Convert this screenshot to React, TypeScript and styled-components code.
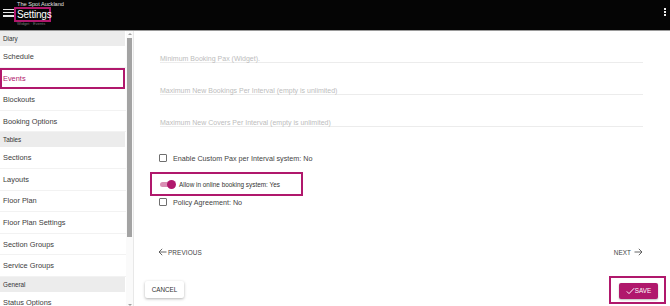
import React from "react";
import styled, { createGlobalStyle, css } from "styled-components";

const Global = createGlobalStyle`
  html, body { margin: 0; padding: 0; background: #fff; }
  body { font-family: "Liberation Sans", Arial, sans-serif; }
  * { box-sizing: border-box; }
`;

const ACCENT = "#b0186c";

const Page = styled.div`
  width: 670px;
  height: 306px;
  display: flex;
  flex-direction: column;
  overflow: hidden;
`;

const TopBar = styled.header`
  height: 31px;
  flex: none;
  background: #050505;
  border-bottom: 1px solid #9a9a9a;
  display: flex;
  align-items: flex-start;
  padding: 0 4px 0 3px;
`;

const MenuButton = styled.div`
  width: 11px;
  margin-top: 9px;
  display: flex;
  flex-direction: column;
  gap: 2px;
  span {
    display: block;
    height: 1.2px;
    background: #e8e8e8;
  }
`;

const TitleBlock = styled.div`
  margin-left: 0px;
  display: flex;
  flex-direction: column;
`;

const Venue = styled.div`
  font-size: 5.6px;
  line-height: 6px;
  color: #e0e0e0;
  margin-top: 1px;
  padding-left: 3px;
  white-space: nowrap;
`;

const TitleBox = styled.div`
  width: 37px;
  height: 15px;
  border: 2px solid ${ACCENT};
  padding-left: 1px;
  font-size: 10px;
  line-height: 11px;
  letter-spacing: -0.2px;
  color: #fff;
  white-space: nowrap;
`;

const SubTitle = styled.div`
  font-size: 4px;
  line-height: 4px;
  color: #777;
  padding-left: 3px;
  white-space: nowrap;
`;

const Spacer = styled.div`
  flex: 1;
`;

const Kebab = styled.div`
  margin-top: 8px;
  display: flex;
  flex-direction: column;
  gap: 1.6px;
  span {
    width: 1.6px;
    height: 1.6px;
    background: #eee;
  }
`;

const Body = styled.div`
  flex: 1;
  display: flex;
  min-height: 0;
`;

const Sidebar = styled.nav`
  width: 134px;
  flex: none;
  display: flex;
  border-right: 1px solid #e8e8e8;
`;

const NavList = styled.div`
  flex: 1;
  overflow: hidden;
  display: flex;
  flex-direction: column;
`;

const GroupHeader = styled.div`
  flex: none;
  height: 15px;
  background: #ececec;
  font-size: 6.3px;
  color: #333;
  display: flex;
  align-items: center;
  padding-left: 3px;
  margin-right: 1px;
`;

const NavItem = styled.div<{ $active?: boolean }>`
  flex: none;
  height: 21.6px;
  display: flex;
  align-items: center;
  padding-left: 3px;
  font-size: 7.4px;
  color: #3c3c3c;
  border-bottom: 1px solid #f2f2f2;
  ${(p) =>
    p.$active &&
    css`
      color: ${ACCENT};
      border: 2px solid ${ACCENT};
      padding-left: 1px;
      margin-right: 1px;
    `}
`;

const ScrollTrack = styled.div`
  width: 7px;
  flex: none;
  display: flex;
  flex-direction: column;
  align-items: center;
  padding-top: 2px;
  background: #fafafa;
`;

const ScrollArrow = styled.div<{ $down?: boolean }>`
  width: 0;
  height: 0;
  border-left: 2px solid transparent;
  border-right: 2px solid transparent;
  ${(p) =>
    p.$down
      ? css`border-top: 2px solid #a0a0a0;`
      : css`border-bottom: 2px solid #a0a0a0;`}
`;

const ScrollThumb = styled.div`
  width: 5px;
  height: 199px;
  margin-top: 3px;
  background: #a3a3a3;
`;

const Main = styled.main`
  flex: 1;
  display: flex;
  flex-direction: column;
`;

const Form = styled.div`
  padding: 0 27px 0 26px;
  display: flex;
  flex-direction: column;
`;

const Field = styled.div`
  height: 32px;
  display: flex;
  align-items: flex-end;
  padding-bottom: 0;
  border-bottom: 1px solid #ececec;
  font-size: 7px;
  line-height: 7px;
  color: #bdbdbd;
`;

const CheckRow = styled.label<{ $top: number }>`
  margin-top: ${(p) => p.$top}px;
  height: 12px;
  display: flex;
  align-items: center;
  gap: 6px;
  font-size: 7.2px;
  color: #444;
`;

const Box = styled.span`
  width: 8px;
  height: 8px;
  margin-left: -1px;
  border: 1px solid #6f6f6f;
  border-radius: 1px;
  flex: none;
`;

const ToggleFrame = styled.div`
  margin-top: 8px;
  margin-left: -10px;
  width: 153px;
  height: 24px;
  border: 2px solid ${ACCENT};
  display: flex;
  align-items: center;
  padding-left: 8px;
  gap: 4px;
  font-size: 6.4px;
  color: #333;
`;

const Track = styled.span`
  position: relative;
  width: 15px;
  height: 5px;
  border-radius: 3px;
  background: #d98fb4;
  flex: none;
`;

const Knob = styled.span`
  position: absolute;
  right: -1px;
  top: -2px;
  width: 9px;
  height: 9px;
  border-radius: 50%;
  background: ${ACCENT};
`;

const Pager = styled.div`
  margin-top: 39px;
  margin-left: -2px;
  height: 10px;
  display: flex;
  justify-content: space-between;
  align-items: center;
  font-size: 6.4px;
  color: #444;
  letter-spacing: 0.1px;
`;

const PagerLink = styled.span`
  display: flex;
  align-items: center;
  gap: 1px;
`;

const Footer = styled.div`
  margin-top: 19px;
  padding: 0 4px 0 11px;
  display: flex;
  justify-content: space-between;
  align-items: center;
`;

const CancelButton = styled.button`
  margin-top: -2px;
  width: 39px;
  height: 17px;
  border: none;
  border-radius: 2px;
  background: #fff;
  box-shadow: 0 1px 3px rgba(0, 0, 0, 0.3);
  font-family: inherit;
  font-size: 6.3px;
  color: #333;
  padding: 0;
`;

const SaveFrame = styled.div`
  width: 57px;
  height: 28px;
  border: 2px solid ${ACCENT};
  display: flex;
  align-items: center;
  justify-content: center;
  padding-left: 2px;
`;

const SaveButton = styled.button`
  width: 39px;
  height: 16px;
  margin-top: 1px;
  border: none;
  border-radius: 2px;
  background: ${ACCENT};
  color: #fff;
  font-family: inherit;
  font-size: 6.3px;
  display: flex;
  align-items: center;
  justify-content: center;
  padding: 0;
  box-shadow: 0 1px 2px rgba(0, 0, 0, 0.25);
`;

const Arrow = ({ dir }: { dir: "left" | "right" }) => (
  <svg width="9" height="8" viewBox="0 0 9 8" fill="none" stroke="#555" strokeWidth="0.9">
    {dir === "left" ? (
      <path d="M8.5 4H1M4.2 0.8L1 4l3.2 3.2" />
    ) : (
      <path d="M0.5 4H8M4.8 0.8L8 4 4.8 7.2" />
    )}
  </svg>
);

const Check = () => (
  <svg width="9" height="8" viewBox="0 0 9 8" fill="none" stroke="#fff" strokeWidth="1">
    <path d="M0.8 4.4L3 6.6 8.2 1.2" />
  </svg>
);

const groups: { title: string; items: string[] }[] = [
  { title: "Diary", items: ["Schedule", "Events", "Blockouts", "Booking Options"] },
  {
    title: "Tables",
    items: ["Sections", "Layouts", "Floor Plan", "Floor Plan Settings", "Section Groups", "Service Groups"],
  },
  { title: "General", items: ["Status Options"] },
];

export default function App() {
  return (
    <Page>
      <Global />
      <TopBar>
        <MenuButton>
          <span />
          <span />
          <span />
        </MenuButton>
        <TitleBlock>
          <Venue>The Spot Auckland</Venue>
          <TitleBox>Settings</TitleBox>
          <SubTitle>Widget · Events</SubTitle>
        </TitleBlock>
        <Spacer />
        <Kebab>
          <span />
          <span />
          <span />
        </Kebab>
      </TopBar>
      <Body>
        <Sidebar>
          <NavList>
            {groups.map((g) => (
              <React.Fragment key={g.title}>
                <GroupHeader>{g.title}</GroupHeader>
                {g.items.map((it) => (
                  <NavItem key={it} $active={it === "Events"}>
                    {it}
                  </NavItem>
                ))}
              </React.Fragment>
            ))}
          </NavList>
          <ScrollTrack>
            <ScrollArrow />
            <ScrollThumb />
            <Spacer />
            <ScrollArrow $down />
          </ScrollTrack>
        </Sidebar>
        <Main>
          <Form>
            <Field>Minimum Booking Pax (Widget).</Field>
            <Field>Maximum New Bookings Per Interval (empty is unlimited)</Field>
            <Field>Maximum New Covers Per Interval (empty is unlimited)</Field>
            <CheckRow $top={25}>
              <Box />
              Enable Custom Pax per Interval system: No
            </CheckRow>
            <ToggleFrame>
              <Track>
                <Knob />
              </Track>
              Allow in online booking system: Yes
            </ToggleFrame>
            <CheckRow $top={0}>
              <Box />
              Policy Agreement: No
            </CheckRow>
            <Pager>
              <PagerLink>
                <Arrow dir="left" />
                PREVIOUS
              </PagerLink>
              <PagerLink>
                NEXT&nbsp;
                <Arrow dir="right" />
              </PagerLink>
            </Pager>
          </Form>
          <Footer>
            <CancelButton>CANCEL</CancelButton>
            <SaveFrame>
              <SaveButton>
                <Check />
                SAVE
              </SaveButton>
            </SaveFrame>
          </Footer>
        </Main>
      </Body>
    </Page>
  );
}
